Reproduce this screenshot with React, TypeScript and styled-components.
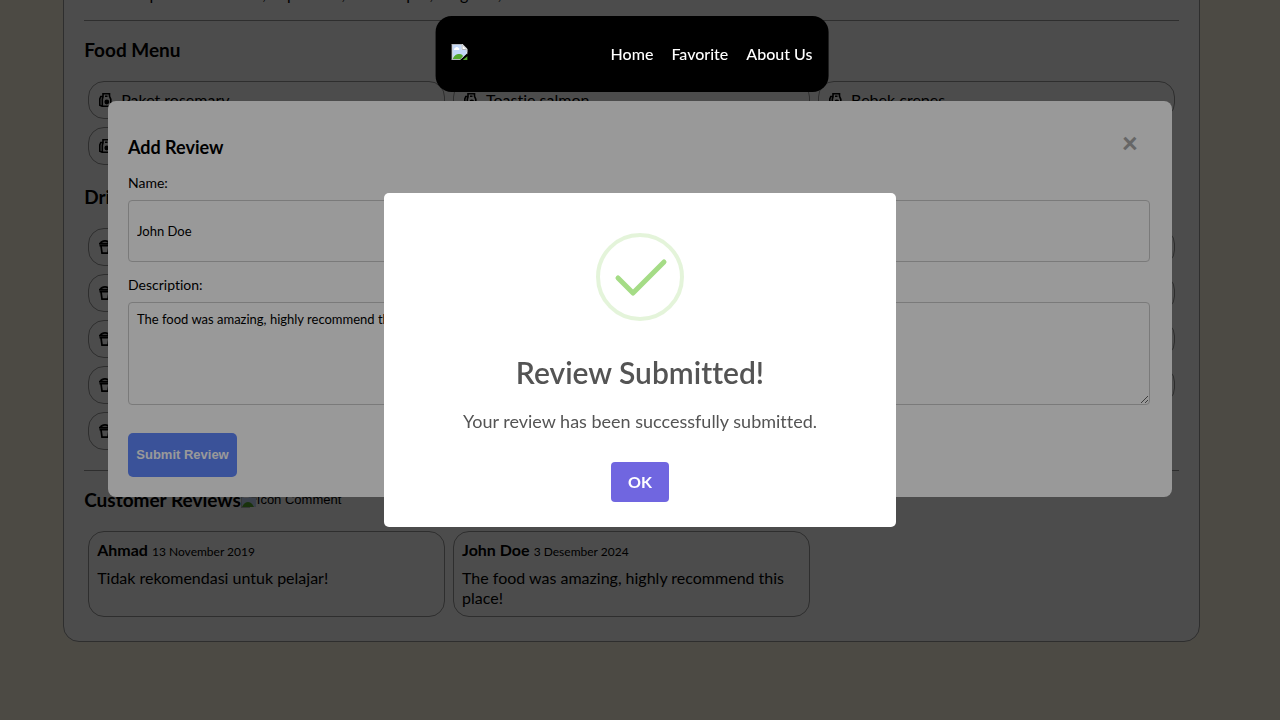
import React from 'react';
import styled, { createGlobalStyle } from 'styled-components';

const GlobalStyle = createGlobalStyle`
  *, *::before, *::after { box-sizing: border-box; }
  body {
    margin: 0;
    background: #fdf7e4;
    color: #000;
    font: 400 16px/20px Lato, "Noto Sans", sans-serif;
    font-variant-ligatures: none;
  }
`;

const Page = styled.div`
  height: 100vh;
  padding: 0 17px 78px 0;
  overflow: hidden;
  display: flex;
  flex-direction: column;
  justify-content: flex-end;
  align-items: center;
`;

const Detail = styled.main`
  width: 90%;
  flex: none;
  padding: 20px;
  background: #fff;
  border: 1px solid #999;
  border-radius: 16px;
`;

const Description = styled.p`
  margin: 0;
`;

const Divider = styled.hr`
  height: 2px;
  margin: 16px 0;
  border: 0;
  border-top: 1px solid #999;
`;

const SectionTitle = styled.h3`
  display: flex;
  align-items: center;
  margin: 16px 0 15px;
  font-size: 19px;
  line-height: 24px;
`;

const CardGrid = styled.ul`
  display: grid;
  grid-template-columns: repeat(3, 1fr);
  gap: 8px;
  margin: 0;
  padding: 4px;
  list-style: none;
`;

const MenuCard = styled.li`
  display: flex;
  align-items: center;
  gap: 8px;
  padding: 8px;
  border: 1px solid #999;
  border-radius: 16px;

  svg { flex: none; }
`;

const ReviewCard = styled.li`
  padding: 8px;
  border: 1px solid #999;
  border-radius: 16px;
`;

const Reviewer = styled.p`
  margin: 0 0 8px;

  small { font-size: 12px; line-height: 12px; }
`;

const ReviewText = styled.p`
  margin: 0;
`;

const AltText = styled.span`
  font: 400 13px/20px "Liberation Sans", Arial, sans-serif;
`;

const NavBar = styled.nav`
  position: fixed;
  z-index: 30;
  top: 16px;
  left: calc(50% - 8px);
  transform: translateX(-50%);
  display: flex;
  align-items: center;
  gap: 143px;
  height: 76px;
  padding: 0 16px;
  border-radius: 16px;
  background: #000;
`;

const Logo = styled.a`
  display: flex;
  padding-bottom: 4px;
`;

const NavLinks = styled.div`
  display: flex;
  gap: 18px;
`;

const NavLink = styled.a`
  color: #fff;
  font-weight: 500;
  text-decoration: none;
  white-space: nowrap;
`;

const Backdrop = styled.div<{ $level: number; $shade: number }>`
  position: fixed;
  inset: 0;
  z-index: ${p => p.$level};
  display: flex;
  justify-content: center;
  align-items: ${p => (p.$level === 10 ? 'flex-start' : 'center')};
  padding-top: ${p => (p.$level === 10 ? 101 : 0)}px;
  background: rgba(0, 0, 0, ${p => p.$shade});
`;

const ReviewDialog = styled.section`
  width: calc(80% + 40px);
  padding: 34px 22px 20px 20px;
  border-radius: 8px;
  background: #fff;
`;

const DialogHeader = styled.header`
  display: flex;
  justify-content: space-between;
  align-items: flex-start;
  margin-bottom: 14px;
`;

const DialogTitle = styled.h3`
  margin: 0;
  font-size: 18px;
  line-height: 24px;
`;

const CloseButton = styled.button`
  height: 14px;
  padding: 0 12px 0 0;
  border: 0;
  background: none;
  color: #aaa;
  font: 900 28px/12px Lato, sans-serif;
`;

const Form = styled.form`
  display: flex;
  flex-direction: column;
  align-items: flex-start;
`;

const Label = styled.label`
  margin-bottom: 7px;
  font-size: 14px;
  line-height: 20px;
`;

const NameInput = styled.input`
  width: 100%;
  height: 62px;
  margin-bottom: 13px;
  padding: 8px;
  border: 1px solid #ccc;
  border-radius: 4px;
  background: #fff;
  color: #000;
  font: 400 13px/16px Lato, sans-serif;
`;

const CommentInput = styled.textarea`
  width: 100%;
  height: 103px;
  margin-bottom: 28px;
  padding: 8px;
  border: 1px solid #ccc;
  border-radius: 4px;
  background: #fff;
  color: #000;
  font: 400 13px/16px Lato, sans-serif;
  font-variant-ligatures: none;
  resize: vertical;
`;

const SubmitButton = styled.button`
  height: 44px;
  min-width: 109px;
  padding: 0 8px;
  border: 0;
  border-radius: 5px;
  background: #6189ff;
  color: #fff;
  font: 700 13px/16px "Liberation Sans", Arial, sans-serif;
`;

const Alert = styled.section`
  width: 512px;
  max-width: 100%;
  display: flex;
  flex-direction: column;
  align-items: center;
  padding: 40px 20px 25px;
  border-radius: 5px;
  background: #fff;
  color: #545454;
`;

const AlertTitle = styled.h2`
  margin: 31px 0 19px;
  font-size: 30px;
  font-weight: 600;
  line-height: 40px;
`;

const AlertText = styled.p`
  margin: 0 0 31px;
  font-size: 18px;
  line-height: 20px;
`;

const AlertButton = styled.button`
  height: 40px;
  min-width: 58px;
  border: 0;
  border-radius: 4px;
  background: #7066e0;
  color: #fff;
  font: 700 16px/20px Lato, sans-serif;
`;

const BrokenImage = () => (
  <svg width="16" height="16" viewBox="0 0 16 16" aria-hidden="true">
    <path d="M0 0h11l5 5v11H0z" fill="#fff" />
    <path d="M1 1h9v5h5v9H1z" fill="#c3d8f7" />
    <path d="M2.500 6a1.500 1.500 0 0 1 1-2 2 2 0 0 1 3.500 0 1.300 1.300 0 0 1 .5 2z" fill="#fff" />
    <path d="M1 15c2-4 4-5 6-5s4 1 6 5z" fill="#54a82e" />
    <path d="M0 .5h10.500L15.500 5.500V8M.5 0v16M0 15.500h9" fill="none" stroke="#b3b7bd" />
    <path d="M10.500 1v4.500H15" fill="none" stroke="#b3b7bd" />
  </svg>
);

const LogoImage = () => (
  <svg width="16" height="16" viewBox="0 0 16 16" aria-hidden="true">
    <path d="M0 0h11l5 5v5l-7 6H0z" fill="#fff" />
    <path d="M1 1h9v5h5v4l-6 5H1z" fill="#c3d8f7" />
    <path d="M2.500 6a1.500 1.500 0 0 1 1-2 2 2 0 0 1 3.500 0 1.300 1.300 0 0 1 .5 2z" fill="#fff" />
    <path d="M1 15c2-4 4-5 6-5s3 0 4.500 2L9 15z" fill="#54a82e" />
    <path d="M11 16l5-4v4z" fill="#54a82e" />
    <path d="M0 .5h10.500L15.500 5.500V8M.5 0v16M0 15.500h9M10.500 1v4.500H15" fill="none" stroke="#b3b7bd" />
    <path d="M8.500 16l7.500-7v2l-5 5z" fill="#000" />
  </svg>
);

const FoodIcon = () => (
  <svg width="16" height="16" viewBox="0 0 16 16" fill="none" stroke="#000" strokeWidth="1.600" aria-hidden="true">
    <path d="M6 1.800h6.500v2.500l1.300 2.900v7H5.300v-7L6 4.800zM5.600 4.500H3.800L2.800 7v6.200l2.500 1M8 4.300h2.500" />
    <circle cx="9.800" cy="10" r="1.600" fill="#000" />
  </svg>
);

const DrinkIcon = () => (
  <svg width="16" height="16" viewBox="0 0 16 16" fill="none" stroke="#000" strokeWidth="1.700" aria-hidden="true">
    <path d="M3.500 4.200C4.500 2.200 6 1.800 8 1.800s3.500.4 4.500 2.400M2 4.700h12M2.500 6.600h11M4 6.600l1 7.500h6l1-7.500" />
  </svg>
);

const foods = ['Paket rosemary', 'Toastie salmon', 'Bebek crepes', 'Salad lengkeng'];
const drinks = [
  'Es krim', 'Sirup', 'Jus apel', 'Jus jeruk', 'Coklat panas', 'Air', 'Es kopi',
  'Jus alpukat', 'Jus mangga', 'Teh manis', 'Kopi espresso', 'Minuman soda', 'Jus tomat',
];
const reviews = [
  { name: 'Ahmad', date: '13 November 2019', text: 'Tidak rekomendasi untuk pelajar!' },
  { name: 'John Doe', date: '3 Desember 2024', text: 'The food was amazing, highly recommend this place!' },
];

export default function App() {
  return (
    <>
      <GlobalStyle />
      <NavBar>
        <Logo href="#home" aria-label="Home"><LogoImage /></Logo>
        <NavLinks>
          <NavLink href="#home">Home</NavLink>
          <NavLink href="#favorite">Favorite</NavLink>
          <NavLink href="#about">About Us</NavLink>
        </NavLinks>
      </NavBar>

      <Page>
        <Detail>
          <Description>
            enim. Aliquam lorem ante, dapibus in, viverra quis, feugiat a, tellus. Phasellus viverra nulla ut metus varius.
          </Description>
          <Divider />
          <SectionTitle>Food Menu</SectionTitle>
          <CardGrid>
            {foods.map(name => <MenuCard key={name}><FoodIcon />{name}</MenuCard>)}
          </CardGrid>
          <SectionTitle>Drink Menu</SectionTitle>
          <CardGrid>
            {drinks.map(name => <MenuCard key={name}><DrinkIcon />{name}</MenuCard>)}
          </CardGrid>
          <Divider />
          <SectionTitle>
            Customer Reviews<BrokenImage /><AltText>Icon Comment</AltText>
          </SectionTitle>
          <CardGrid>
            {reviews.map(r => (
              <ReviewCard key={r.name}>
                <Reviewer><b>{r.name}</b> <small>{r.date}</small></Reviewer>
                <ReviewText>{r.text}</ReviewText>
              </ReviewCard>
            ))}
          </CardGrid>
        </Detail>
      </Page>

      <Backdrop $level={10} $shade={0.5}>
        <ReviewDialog role="dialog" aria-label="Add Review">
          <DialogHeader>
            <DialogTitle>Add Review</DialogTitle>
            <CloseButton type="button" aria-label="Close">×</CloseButton>
          </DialogHeader>
          <Form>
            <Label htmlFor="name">Name:</Label>
            <NameInput id="name" defaultValue="John Doe" />
            <Label htmlFor="description">Description:</Label>
            <CommentInput id="description" defaultValue="The food was amazing, highly recommend this place!" />
            <SubmitButton type="button">Submit Review</SubmitButton>
          </Form>
        </ReviewDialog>
      </Backdrop>

      <Backdrop $level={20} $shade={0.4}>
        <Alert role="alertdialog" aria-labelledby="alert-title">
          <svg width="88" height="88" viewBox="0 0 88 88" fill="none" aria-hidden="true">
            <circle cx="44" cy="44" r="42" stroke="#a5dc86" strokeOpacity=".3" strokeWidth="4" />
            <path d="M22 45l15 15 31-31" stroke="#a5dc86" strokeWidth="5" strokeLinecap="round" strokeLinejoin="round" />
          </svg>
          <AlertTitle id="alert-title">Review Submitted!</AlertTitle>
          <AlertText>Your review has been successfully submitted.</AlertText>
          <AlertButton type="button">OK</AlertButton>
        </Alert>
      </Backdrop>
    </>
  );
}
